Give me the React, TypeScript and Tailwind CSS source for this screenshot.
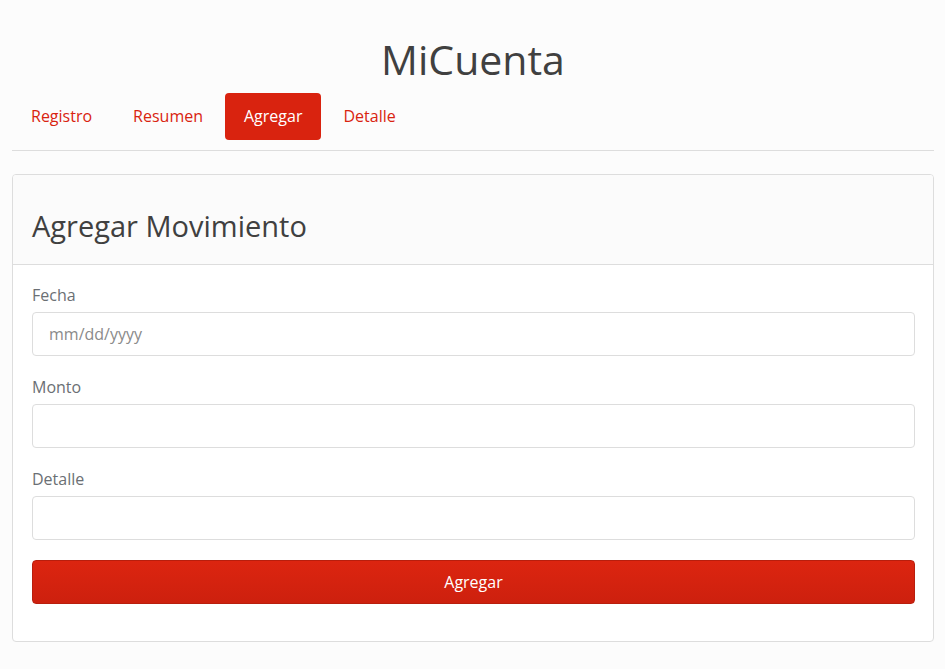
import React from "react";

export default function App() {
  const tabs = ["Registro", "Resumen", "Agregar", "Detalle"];
  return (
    <div className="min-h-[669px] bg-[#fcfcfc] pl-3 pr-[11px] pt-[26px]" style={{ fontFamily: '"Open Sans", sans-serif' }}>
      <h1 className="text-center text-[41px] leading-[66px] text-[#404040]">MiCuenta</h1>
      <nav className="mt-[1px] flex gap-[3px] border-b border-[#dddddd] pb-[10px]">
        {tabs.map((t) => (
          <a
            key={t}
            className={
              t === "Agregar"
                ? "rounded-[4px] bg-[#d9230f] px-[19px] py-[12px] text-[16px] leading-[23px] text-white"
                : "rounded-[4px] px-[19px] py-[12px] text-[16px] leading-[23px] text-[#d9230f]"
            }
          >
            {t}
          </a>
        ))}
      </nav>
      <div className="mt-[23px] overflow-hidden rounded-[4px] border border-[#dddddd] bg-white">
        <div className="flex h-[90px] items-center border-b border-[#dddddd] bg-[#fbfbfb] pl-[19px] pt-[13px]">
          <h2 className="text-[29px] leading-[40px] text-[#404040]">Agregar Movimiento</h2>
        </div>
        <div className="pl-[19px] pr-[18px] pt-[19px] pb-[37px]">
          {[
            ["Fecha", "mm/dd/yyyy"],
            ["Monto", ""],
            ["Detalle", ""],
          ].map(([label, ph]) => (
            <div key={label} className="mb-[20px]">
              <label className="mb-[6px] block text-[16px] leading-[22px] text-[#6b6f74]">{label}</label>
              <div className="flex h-[44px] items-center rounded-[4px] border border-[#dddddd] bg-white px-4 text-[16px] text-[#8a8a8a]">
                {ph}
              </div>
            </div>
          ))}
          <button className="flex h-[44px] w-full items-center justify-center rounded-[4px] border border-[#b81e0d] bg-gradient-to-b from-[#dc2510] to-[#cd200e] text-[16px] text-white">
            Agregar
          </button>
        </div>
      </div>
    </div>
  );
}
